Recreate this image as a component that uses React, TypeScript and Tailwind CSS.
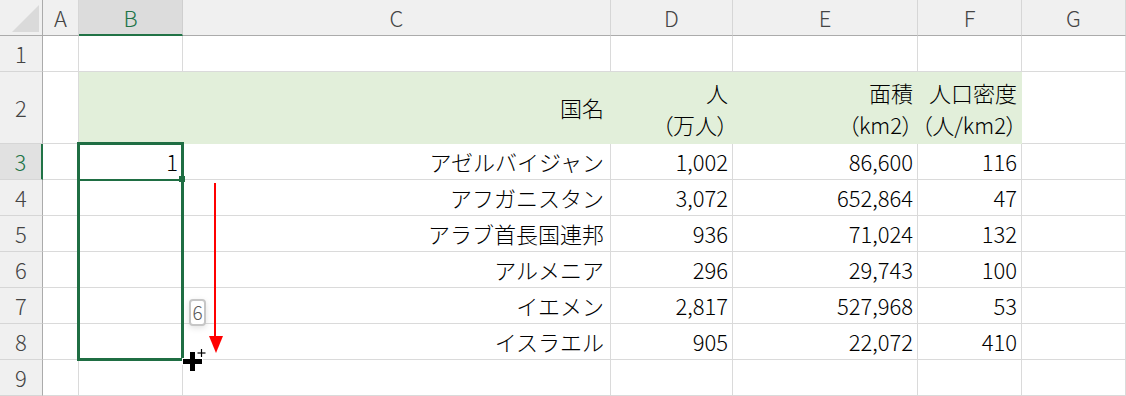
import { ReactNode } from "react";

const COLS = ["A", "B", "C", "D", "E", "F", "G"];

const rows: [string, string, string, string][] = [
  ["アゼルバイジャン", "1,002", "86,600", "116"],
  ["アフガニスタン", "3,072", "652,864", "47"],
  ["アラブ首長国連邦", "936", "71,024", "132"],
  ["アルメニア", "296", "29,743", "100"],
  ["イエメン", "2,817", "527,968", "53"],
  ["イスラエル", "905", "22,072", "410"],
];

function Cell({ children, className = "" }: { children?: ReactNode; className?: string }) {
  return (
    <div
      className={`flex items-center justify-end pr-[4px] border-r border-b border-[#dadada] whitespace-nowrap ${className}`}
    >
      {children}
    </div>
  );
}

function RowHead({ n, active }: { n: number; active?: boolean }) {
  return (
    <div
      className={`flex items-center justify-center border-b border-b-[#d6d6d6] ${
        active
          ? "bg-[#e1e1e1] text-[#217346] border-r-2 border-r-[#217346]"
          : "bg-[#f0f0f0] text-[#444] border-r border-r-[#ababab]"
      }`}
    >
      {n}
    </div>
  );
}

function Head2({ top, bottom }: { top: string; bottom: string }) {
  return (
    <Cell className="bg-[#e2efda] border-r-[#e2efda] border-b-[#e2efda]">
      <div className="flex flex-col items-end leading-[32px]">
        <span>{top}</span>
        <span className="[font-feature-settings:'palt']">{bottom}</span>
      </div>
    </Cell>
  );
}

export default function App() {
  return (
    <div className="relative w-[1126px] h-[396px] overflow-hidden bg-white text-[22px] font-light text-black font-['Noto_Sans_CJK_JP',sans-serif]">
      <div className="grid grid-cols-[43px_36px_104px_428px_122px_185px_104px_1fr] grid-rows-[36px_36px_72px_repeat(7,36px)]">
        {/* column headers */}
        <div className="relative bg-[#f0f0f0] border-r border-r-[#ababab] border-b border-b-[#ababab]">
          <svg className="absolute left-0 top-0" width="42" height="35">
            <polygon points="12,32 39,32 39,5" fill="#dadada" />
          </svg>
        </div>
        {COLS.map((c) => (
          <div
            key={c}
            className={`flex items-center justify-center ${
              c === "B"
                ? "bg-[#dcdcdc] text-[#217346] border-b-2 border-b-[#217346] border-r border-r-[#cfcfcf]"
                : "bg-[#f0f0f0] text-[#444] border-b border-b-[#ababab] border-r border-r-[#d6d6d6]"
            }`}
          >
            {c}
          </div>
        ))}

        {/* row 1 */}
        <RowHead n={1} />
        {COLS.map((c) => (
          <Cell key={c} />
        ))}

        {/* row 2 */}
        <RowHead n={2} />
        <Cell />
        <Cell className="bg-[#e2efda] border-r-[#e2efda] border-b-[#e2efda]" />
        <Cell className="bg-[#e2efda] border-r-[#e2efda] border-b-[#e2efda] pr-[6px]">国名</Cell>
        <Head2 top="人" bottom="（万人）" />
        <Head2 top="面積" bottom="（km2）" />
        <Head2 top="人口密度" bottom="（人/km2）" />
        <Cell />

        {/* data rows */}
        {rows.map((r, i) => (
          <div key={i} className="contents">
            <RowHead n={i + 3} active={i === 0} />
            <Cell />
            <Cell>{i === 0 ? "1" : ""}</Cell>
            <Cell className="pr-[6px]">{r[0]}</Cell>
            <Cell>{r[1]}</Cell>
            <Cell>{r[2]}</Cell>
            <Cell>{r[3]}</Cell>
            <Cell />
          </div>
        ))}

        {/* row 9 */}
        <RowHead n={9} />
        {COLS.map((c) => (
          <Cell key={c} />
        ))}
      </div>

      {/* selection range */}
      <div className="absolute left-[77px] top-[142px] w-[107px] h-[219px] border-[3px] border-[#1f6e43]" />
      <div className="absolute left-[80px] top-[179px] w-[100px] h-[2px] bg-[#1f6e43]" />
      <div className="absolute left-[179px] top-[176px] w-[6px] h-[6px] bg-[#1f6e43]" />

      {/* fill count tooltip */}
      <div className="absolute left-[189px] top-[299px] w-[17px] h-[27px] rounded-[4px] border-2 border-[#c6c6c6] bg-white shadow-[0_2px_6px_rgba(0,0,0,0.12)] flex items-center justify-center text-[19px] text-[#595959]">
        6
      </div>

      {/* red arrow */}
      <svg className="absolute left-[200px] top-[180px]" width="30" height="180">
        <line x1="15" y1="3" x2="15" y2="160" stroke="#ff0000" strokeWidth="2" />
        <polygon points="9,156 23,156 16,173" fill="#ff0000" />
      </svg>

      {/* fill cursor */}
      <svg className="absolute left-[180px] top-[346px]" width="30" height="30">
        <rect x="2.5" y="12.5" width="20" height="6" fill="#000" stroke="#fff" strokeWidth="1" />
        <rect x="9.5" y="5.5" width="6" height="20" fill="#000" stroke="#fff" strokeWidth="1" />
        <rect x="3" y="13" width="19" height="5" fill="#000" />
        <line x1="21.5" y1="3" x2="21.5" y2="11" stroke="#000" strokeWidth="1.2" />
        <line x1="17.5" y1="7" x2="25.5" y2="7" stroke="#000" strokeWidth="1.2" />
      </svg>
    </div>
  );
}
